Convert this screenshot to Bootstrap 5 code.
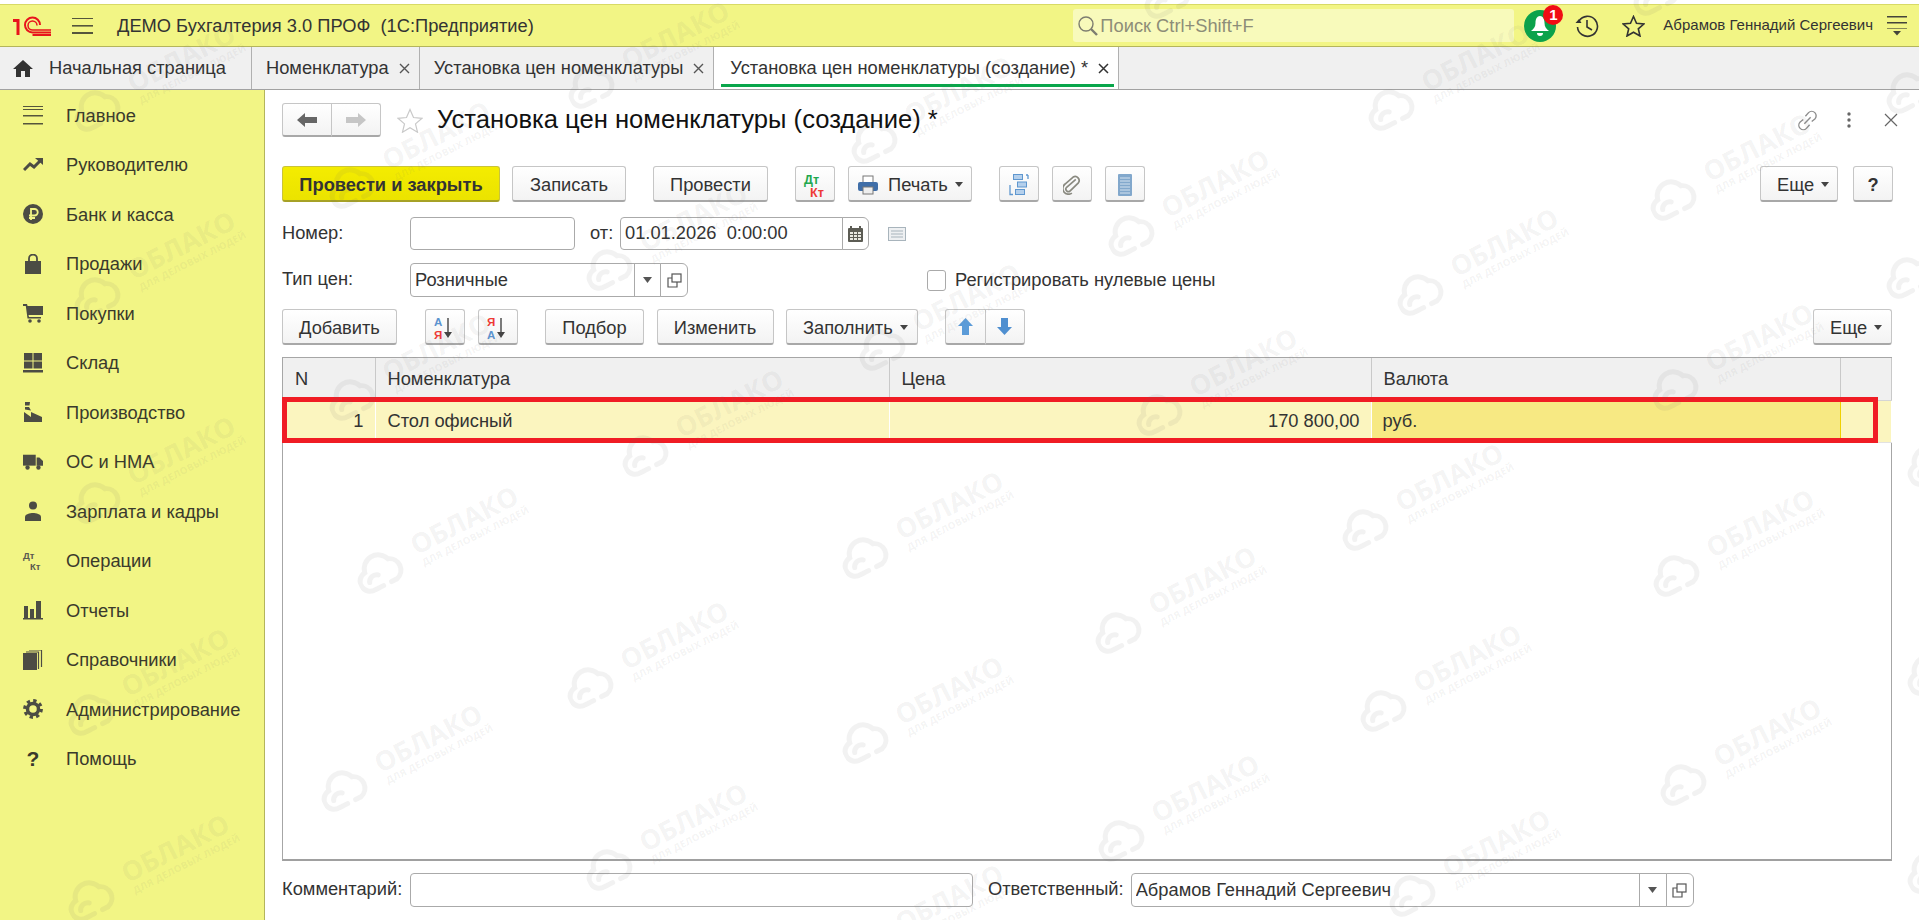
<!DOCTYPE html>
<html lang="ru">
  <head>
    <meta charset="utf-8" />
    <title>Установка цен номенклатуры (создание)</title>
    <link href="https://cdn.jsdelivr.net/npm/bootstrap@5.3.2/dist/css/bootstrap.min.css" rel="stylesheet" />
    <script src="https://cdn.jsdelivr.net/npm/bootstrap@5.3.2/dist/js/bootstrap.bundle.min.js"></script>
    <style>
      body {
        font-family: "Liberation Sans", Arial, sans-serif;
        font-size: 18.3px;
        color: #333;
        background: #fff;
        overflow: hidden;
      }
      .page {
        height: 920px;
        padding-top: 4px;
      }
      .top-bar {
        height: 43px;
        flex: none;
        background: #f2f585;
        border-top: 1px solid #d8da66;
        border-bottom: 1px solid #b4b55c;
        padding: 0 12px 0 13px;
      }
      .burger {
        margin-left: 21px;
        margin-right: 24px;
      }
      .search-box {
        width: 441px;
        height: 33px;
        margin-left: auto;
        padding-left: 5px;
        gap: 2px;
        color: #8d8d78;
        border-radius: 3px;
        background: #f8fabb;
      }
      .bell {
        width: 32px;
        height: 32px;
        margin-left: 10px;
        background: #0ba24b;
      }
      .bell .badge {
        top: -5px;
        right: -7px;
        width: 20px;
        height: 20px;
        padding: 0;
        font-size: 15px;
        line-height: 20px;
        background: #f00d14;
      }
      .top-hist {
        margin-left: 19px;
      }
      .top-star {
        margin-left: 23px;
      }
      .top-user {
        font-size: 15px;
        margin-left: 18px;
        margin-right: 14px;
        white-space: nowrap;
      }
      .tab-bar {
        height: 43px;
        flex: none;
        background: #f0f0f0;
        border-bottom: 1px solid #a2a2a2;
      }
      .tab-item {
        height: 42px;
        padding: 0 9px 0 14px;
        border-right: 1px solid #b0b0b0;
        white-space: nowrap;
      }
      .tab-item svg.cls {
        margin-left: 10px;
      }
      .tab-home {
        width: 252px;
        padding-left: 13px;
      }
      .tab-home svg {
        margin-right: 16px;
      }
      .tab-active {
        background: #fff;
        position: relative;
        padding-left: 16px;
        padding-right: 9px;
      }
      .tab-active::after {
        content: "";
        position: absolute;
        left: 7px;
        right: 4px;
        bottom: 2px;
        height: 3px;
        background: #0aa64b;
      }
      .side-bar {
        width: 265px;
        flex: none;
        padding-top: 0.5px;
        background: #f2f585;
        border-right: 1px solid #b4b55c;
      }
      .side-item {
        height: 49.5px;
        padding-left: 23px;
        color: #3a3a2c;
      }
      .side-item svg,
      .side-item .side-q {
        width: 20px;
        height: 20px;
        margin-right: 23px;
        flex: none;
      }
      .side-q {
        font-size: 21px;
        line-height: 20px;
        text-align: center;
        font-weight: bold;
      }
      .work {
        padding: 13px 27px 0 17px;
        min-width: 0;
      }
      .tb-row {
        height: 36px;
        gap: 27px;
      }
      .tb-row-tools {
        gap: 27.5px;
      }
      .tb-group {
        gap: 12px;
      }
      .tb-group-13 {
        gap: 13px;
      }
      .tb-group-125 {
        gap: 12.5px;
      }
      .tb-group-help {
        gap: 15px;
        margin-right: -1px;
      }
      .btn.cbtn {
        height: 36px;
        padding: 2px 0 0;
        font-size: 18.3px;
        color: #333;
        background: linear-gradient(#fff, #f3f3f3);
        border: 1px solid #c6c6c6;
        border-bottom: 2px solid #a8a8a8;
        border-radius: 3px;
        display: flex;
        align-items: center;
        justify-content: center;
        white-space: nowrap;
      }
      .btn.cbtn-main {
        font-weight: bold;
        background: linear-gradient(#f4ec00, #ebe300);
        border-color: #c9c33a;
        border-bottom-color: #a6a126;
      }
      .btn.cbtn.dropdown-toggle {
        justify-content: flex-start;
        padding-left: 16px;
      }
      .btn.cbtn.dropdown-toggle::after {
        margin-left: 7px;
        color: #444;
        border-top-width: 5px;
        border-left-width: 4px;
        border-right-width: 4px;
      }
      .bw-ico { width: 40px; }
      .bw-close { width: 218px; }
      .bw-write { width: 114px; }
      .bw-post { width: 115px; }
      .btn.cbtn.bw-print { width: 124px; padding-left: 9px; }
      .bw-print svg { margin-right: 10px; }
      .bw-more { width: 78px; }
      .bw-more-end { width: 79px; }
      .bw-add { width: 115px; }
      .bw-pick { width: 99px; }
      .bw-edit { width: 117px; }
      .bw-fill { width: 131.5px; }
      .nav-group {
        width: 99px;
        height: 34px;
      }
      .btn-group .btn.cbtn {
        height: 34px;
        padding-top: 0;
        flex: 1;
      }
      .order-group .btn.cbtn {
        height: 36px;
      }
      .order-group {
        width: 80px;
      }
      .star-ico {
        margin-left: 16px;
        margin-right: 14px;
      }
      .doc-title {
        font-size: 25.6px;
        line-height: 32px;
        margin: 0 0 2px;
        font-weight: normal;
        color: #111;
      }
      .nav-acts {
        gap: 28px;
        margin-right: -6px;
      }
      .nav-close {
        margin-left: 4px;
      }
      .field-row {
        height: 34px;
      }
      .field-row-first {
        height: 33px;
      }
      .lbl {
        width: 128px;
        flex: none;
        padding-bottom: 2px;
      }
      .form-control.cinput {
        height: 34px;
        min-height: 34px;
        padding: 0 4px 1px;
        font-size: 18.3px;
        color: #333;
        border: 1px solid #aaa;
        border-radius: 4px;
        box-shadow: none;
      }
      .field-row-first .form-control.cinput {
        height: 33px;
        min-height: 33px;
      }
      .input-group > .input-group-text.cadd {
        height: 34px;
        padding: 0;
        justify-content: center;
        background: #fff;
        border: 1px solid #aaa;
        font-size: 10px;
      }
      .field-row-first .input-group > .input-group-text.cadd {
        height: 33px;
      }
      .w-num { width: 165px; }
      .w-date { width: 249px; }
      .w-type { width: 278px; }
      .w-cmt { width: 563px; }
      .w-resp { width: 563px; }
      .add-27 { width: 27px; }
      .add-28 { width: 28px; }
      .from-lbl {
        margin-left: 15px;
        width: 30px;
        padding-bottom: 2px;
      }
      .note-ico {
        margin-left: 19px;
      }
      .check-wrap {
        margin-left: 239px;
      }
      .form-check-input.ccheck {
        width: 19px;
        height: 21px;
        margin: 0 9px 0 0;
        border: 1px solid #aaa;
        border-radius: 3px;
      }
      .grid-box {
        height: 504px;
        border: 1px solid #a6a6a6;
        border-bottom: 2px solid #a0a0a0;
      }
      .cgrid {
        table-layout: fixed;
        width: 1608px;
        margin: 0;
        color: #333;
        font-size: 18.3px;
      }
      .cgrid th {
        height: 42px;
        padding: 0 0 0 12px;
        font-weight: normal;
        vertical-align: middle;
        background: #f0f0f0;
        border: 0;
        border-right: 1px solid #c9c9c9;
        border-bottom: 1px solid #d5d5d5;
      }
      .cgrid td {
        height: 42px;
        padding: 0 0 0 12px;
        vertical-align: middle;
        background: #fbf5bf;
        color: #333;
        border: 0;
        border-right: 1px solid #fff;
        border-bottom: 1px solid #e2e2e2;
      }
      .cgrid td.cell-num {
        text-align: right;
        padding-right: 11px;
      }
      .cgrid td.cell-on {
        background: #f7e983;
        border: 1px solid #efd000;
        padding-left: 11px;
      }
      .red-frame {
        position: absolute;
        left: -1px;
        top: 39px;
        width: 1596px;
        height: 46px;
        border: 5px solid #f01c24;
      }
      .dk-ico {
        overflow: visible;
      }
      .wm-layer {
        position: absolute;
        inset: 0;
        overflow: hidden;
        pointer-events: none;
        z-index: 20;
      }
      .wm-mark {
        position: absolute;
        display: flex;
        align-items: center;
        gap: 15px;
        transform: rotate(-27deg);
        transform-origin: 25px 25px;
        color: rgba(110, 110, 110, 0.085);
        font-family: "Open Sans", "Liberation Sans", sans-serif;
        font-weight: 700;
        white-space: nowrap;
      }
      .wm-mark svg {
        flex: none;
      }
      .wm-name {
        font-size: 27px;
        line-height: 28px;
      }
      .wm-sub {
        font-size: 9.6px;
        line-height: 12px;
        letter-spacing: 0.35px;
        padding-left: 2px;
      }
      .mt-tb { margin-top: 29px; }
      .mt-f1 { margin-top: 15px; }
      .mt-f2 { margin-top: 13px; }
      .mt-f3 { margin-top: 12px; }
      .flex-none { flex: none; }
      .gc-n { width: 92px; }
      .gc-name { width: 514px; }
      .gc-price { width: 482px; }
      .gc-cur { width: 469px; }
      .gc-end { width: 51px; }
      .resp-lbl { margin-left: 15px; margin-right: 7px; white-space: nowrap; padding-bottom: 2px; }
    </style>
  </head>
  <body>
    <div class="page d-flex flex-column position-relative">
      <!-- top yellow bar -->
      <div class="top-bar d-flex align-items-center">
        <svg width="38" height="20" viewBox="0 0 38 20" fill="none" stroke="#e8141c" stroke-width="3">
          <path d="M0 4.500h5V19" />
          <path d="M27 9a7.500 7.500 0 1 0-7.500 7.500H38" stroke-width="2" />
          <path d="M24 9.500a4.500 4.500 0 1 0-4.500 4.500H38" stroke-width="1.500" />
          <path d="M19.500 19H38" stroke-width="2" />
        </svg>
        <svg class="burger" width="21" height="16" viewBox="0 0 21 16" fill="#55553c">
          <rect y="0" width="21" height="1" /><rect y="7" width="21" height="1.6" /><rect y="14" width="21" height="2" />
        </svg>
        <span>ДЕМО Бухгалтерия 3.0 ПРОФ&nbsp;&nbsp;(1С:Предприятие)</span>
        <div class="search-box d-flex align-items-center">
          <svg width="20" height="20" viewBox="0 0 20 20" fill="none" stroke="#7d7d70">
            <circle cx="8" cy="8" r="7" stroke-width="1.4" /><path d="M13 13l6 6" stroke-width="2.4" />
          </svg>
          <span>Поиск Ctrl+Shift+F</span>
        </div>
        <div class="bell rounded-circle position-relative d-flex align-items-center justify-content-center flex-none">
          <svg width="20" height="22" viewBox="0 0 20 22" fill="#fff">
            <path d="M10 1c3 0 4.500 3 4.500 7 0 4 2 6 4.500 8H1c2.500-2 4.500-4 4.500-8 0-4 1.500-7 4.500-7z" /><path d="M7 18h6a3 3 0 0 1-6 0z" />
          </svg>
          <span class="badge rounded-circle position-absolute">1</span>
        </div>
        <svg class="top-hist flex-none" width="24" height="24" viewBox="0 0 24 24" fill="none" stroke="#333" stroke-width="1.6">
          <path d="M4 7a10 10 0 1 1-1.500 6" /><path d="M12 6v7l5 3" /><path d="M0.500 9h6L4 5z" fill="#333" stroke="none" />
        </svg>
        <svg class="top-star flex-none" width="23" height="22" viewBox="0 0 23 22" fill="none" stroke="#333" stroke-width="1.6">
          <path d="M11.500 1.500l3 6.800 7.300.7-5.500 4.800 1.700 7.200-6.500-3.800-6.500 3.800 1.700-7.200-5.500-4.800 7.300-.7z" />
        </svg>
        <span class="top-user">Абрамов Геннадий Сергеевич</span>
        <svg class="flex-none" width="20" height="20" viewBox="0 0 20 20" fill="#44443a">
          <rect y="0" width="20" height="1.500" /><rect y="6" width="20" height="1.500" /><rect y="12" width="20" height="1" opacity=".6" /><path d="M6 15h8l-4 4.500z" />
        </svg>
      </div>

      <!-- open windows -->
      <div class="tab-bar d-flex">
        <div class="tab-item tab-home d-flex align-items-center">
          <svg width="20" height="18" viewBox="0 0 20 18" fill="#333"><path d="M10 1L0 10h3v8h5v-6h4v6h5v-8h3z" /></svg>
          <span>Начальная страница</span>
        </div>
        <div class="tab-item d-flex align-items-center">
          <span>Номенклатура</span>
          <svg class="cls" width="11" height="11" viewBox="0 0 11 11" stroke="#555" stroke-width="1.400"><path d="M1 1l9 9M10 1l-9 9" /></svg>
        </div>
        <div class="tab-item d-flex align-items-center">
          <span>Установка цен номенклатуры</span>
          <svg class="cls" width="11" height="11" viewBox="0 0 11 11" stroke="#555" stroke-width="1.400"><path d="M1 1l9 9M10 1l-9 9" /></svg>
        </div>
        <div class="tab-item tab-active d-flex align-items-center">
          <span>Установка цен номенклатуры (создание) *</span>
          <svg class="cls" width="11" height="11" viewBox="0 0 11 11" stroke="#333" stroke-width="1.500"><path d="M1 1l9 9M10 1l-9 9" /></svg>
        </div>
      </div>

      <div class="d-flex flex-grow-1">
        <!-- sections -->
        <div class="side-bar">
          <div class="side-item d-flex align-items-center">
            <svg viewBox="0 0 20 20" fill="#55553c"><rect y="1" width="20" height="1" /><rect y="4" width="20" height="1" /><rect y="10" width="20" height="1.500" /><rect y="18" width="20" height="1.500" /></svg>
            <span>Главное</span>
          </div>
          <div class="side-item d-flex align-items-center">
            <svg viewBox="0 0 20 20" fill="none" stroke="#4c4c44" stroke-width="3"><path d="M1 15l6-6 4 3 6-6" /><path d="M12 3h8v7z" fill="#4c4c44" stroke="none" /></svg>
            <span>Руководителю</span>
          </div>
          <div class="side-item d-flex align-items-center">
            <svg viewBox="0 0 20 20"><circle cx="10" cy="10" r="10" fill="#4c4c44" /><path d="M8 16V5h3.500a3 3 0 0 1 0 6.500H6M6 14h6" fill="none" stroke="#f2f585" stroke-width="1.800" /></svg>
            <span>Банк и касса</span>
          </div>
          <div class="side-item d-flex align-items-center">
            <svg viewBox="0 0 20 20" fill="#4c4c44"><path d="M2 7h16v13H2z" /><path d="M6 9V4.500a4 4 0 0 1 8 0V9" fill="none" stroke="#4c4c44" stroke-width="1.800" /></svg>
            <span>Продажи</span>
          </div>
          <div class="side-item d-flex align-items-center">
            <svg viewBox="0 0 20 20" fill="#4c4c44"><path d="M0 1h4l.6 2H20v9H5.500l.5 2h12v1.500H4.500L2.800 3H0z" /><circle cx="7" cy="18" r="1.800" /><circle cx="16" cy="18" r="1.800" /></svg>
            <span>Покупки</span>
          </div>
          <div class="side-item d-flex align-items-center">
            <svg viewBox="0 0 20 20" fill="#4c4c44"><rect x="1" y="0" width="8.500" height="7.500" /><rect x="10.500" y="0" width="8.500" height="7.500" /><rect x="1" y="8.500" width="8.500" height="7" /><rect x="10.500" y="8.500" width="8.500" height="7" /><rect x="0" y="17" width="20" height="2.500" /></svg>
            <span>Склад</span>
          </div>
          <div class="side-item d-flex align-items-center">
            <svg viewBox="0 0 20 20" fill="#4c4c44"><path d="M1 20V10l7 5v-5l11 5v5z" /><path d="M2 0h5l-.5 3.500H2zM2 5h4l2 3.500-6-1z" /></svg>
            <span>Производство</span>
          </div>
          <div class="side-item d-flex align-items-center">
            <svg viewBox="0 0 22 20" fill="#4c4c44"><rect x="0" y="2" width="14" height="12" /><path d="M15 5h3l4 4v5h-7z" /><circle cx="5" cy="16" r="2.400" /><circle cx="17" cy="16" r="2.400" /></svg>
            <span>ОС и НМА</span>
          </div>
          <div class="side-item d-flex align-items-center">
            <svg viewBox="0 0 20 20" fill="#4c4c44"><circle cx="10" cy="4.500" r="4" /><path d="M2 20v-4c0-3 5-4 8-4s8 1 8 4v4z" /></svg>
            <span>Зарплата и кадры</span>
          </div>
          <div class="side-item d-flex align-items-center">
            <svg class="dk-ico" viewBox="0 0 20 20" fill="#5a5a50" font-family="Liberation Sans, sans-serif" font-weight="700" font-size="9.500"><text x="0" y="8">Дт</text><text x="7" y="19">Кт</text></svg>
            <span>Операции</span>
          </div>
          <div class="side-item d-flex align-items-center">
            <svg viewBox="0 0 20 20" fill="#4c4c44"><rect x="1" y="6" width="4" height="12" /><rect x="7" y="9" width="4" height="9" /><rect x="13" y="1" width="5" height="17" /><rect x="0" y="18" width="20" height="1.500" /></svg>
            <span>Отчеты</span>
          </div>
          <div class="side-item d-flex align-items-center">
            <svg viewBox="0 0 20 20" fill="#4c4c44"><rect x="0" y="3" width="14" height="17" /><path d="M15.500 19V2H3M18.500 17V0H6" fill="none" stroke="#4c4c44" stroke-width="1.200" /></svg>
            <span>Справочники</span>
          </div>
          <div class="side-item d-flex align-items-center">
            <svg viewBox="0 0 20 20" fill="none" stroke="#4c4c44"><circle cx="10" cy="10" r="5.500" stroke-width="3.500" /><circle cx="10" cy="10" r="8.300" stroke-width="3.200" stroke-dasharray="3.300 3.210" /></svg>
            <span>Администрирование</span>
          </div>
          <div class="side-item d-flex align-items-center">
            <div class="side-q">?</div>
            <span>Помощь</span>
          </div>
        </div>

        <!-- document form -->
        <div class="work flex-grow-1">
          <div class="d-flex align-items-center">
            <div class="btn-group nav-group">
              <button type="button" class="btn cbtn">
                <svg width="20" height="14" viewBox="0 0 20 14" fill="#666"><path d="M0 7l8-7v4h12v6H8v4z" /></svg>
              </button>
              <button type="button" class="btn cbtn">
                <svg width="20" height="14" viewBox="0 0 20 14" fill="#c6c6c6"><path d="M20 7l-8-7v4H0v6h12v4z" /></svg>
              </button>
            </div>
            <svg class="star-ico" width="26" height="25" viewBox="0 0 26 25" fill="none" stroke="#c9c9c9" stroke-width="1.200"><path d="M13 1.500l3.500 8 8.500.8-6.500 5.600 2 8.300-7.500-4.400-7.500 4.400 2-8.300L1 10.300l8.500-.8z" /></svg>
            <h1 class="doc-title">Установка цен номенклатуры (создание) *</h1>
            <div class="nav-acts d-flex align-items-center ms-auto">
              <svg width="21" height="21" viewBox="0 0 20 20" fill="none" stroke="#8c8c8c" stroke-width="1.300"><path d="M8 6l3-3.500a4 4 0 0 1 6 6L14 11" /><path d="M12 14l-3 3.500a4 4 0 0 1-6-6L6 9" /><path d="M7 13l6-6" /></svg>
              <svg width="6" height="18" viewBox="0 0 6 18" fill="#666"><circle cx="3" cy="3" r="1.700" /><circle cx="3" cy="9" r="1.700" /><circle cx="3" cy="15" r="1.700" /></svg>
              <svg class="nav-close" width="14" height="14" viewBox="0 0 14 14" stroke="#666" stroke-width="1.200"><path d="M1 1l12 12M13 1L1 13" /></svg>
            </div>
          </div>

          <div class="tb-row d-flex mt-tb">
            <div class="tb-group d-flex">
              <button type="button" class="btn cbtn cbtn-main bw-close">Провести и закрыть</button>
              <button type="button" class="btn cbtn bw-write">Записать</button>
            </div>
            <button type="button" class="btn cbtn bw-post">Провести</button>
            <div class="tb-group-13 d-flex">
              <button type="button" class="btn cbtn bw-ico">
                <svg width="26" height="26" viewBox="0 0 26 26" font-family="Liberation Sans, sans-serif" font-weight="700" font-size="12.500"><text x="2" y="11.500" fill="#22a84f">Дт</text><text x="8" y="24.500" fill="#ee3a36">Кт</text></svg>
              </button>
              <button type="button" class="btn cbtn bw-print dropdown-toggle">
                <svg width="20" height="20" viewBox="0 0 20 20"><rect x="5" y="1" width="10" height="7" fill="#fff" stroke="#777" /><rect x="0" y="7" width="20" height="9" rx="2" fill="#3f6ea8" /><rect x="5" y="12" width="10" height="7" fill="#eee" stroke="#777" /></svg>
                <span>Печать</span>
              </button>
            </div>
            <div class="tb-group-13 d-flex">
              <button type="button" class="btn cbtn bw-ico">
                <svg width="20" height="23" viewBox="0 0 20 23" fill="#b5d0ec" stroke="#5f97cf"><rect x="4.500" y="1.500" width="9" height="5" /><rect x="8.500" y="9" width="9" height="5" /><rect x="6.500" y="16.500" width="9" height="5" /><path d="M1 12v9.500h3M19 2h-2M19 2v4" fill="none" stroke-width="1.300" /></svg>
              </button>
              <button type="button" class="btn cbtn bw-ico">
                <svg width="18" height="20" viewBox="0 0 18 20" fill="none" stroke="#8a8a80" stroke-width="1.700"><path d="M12 4L4 13a2.500 2.500 0 0 0 4 3l7-9a4 4 0 0 0-6-5L2 10a5.500 5.500 0 0 0 8 8" transform="rotate(8 9 10)" /></svg>
              </button>
              <button type="button" class="btn cbtn bw-ico">
                <svg width="14" height="22" viewBox="0 0 14 22"><rect x="0" y="0" width="14" height="22" rx="1" fill="#82a8cc" /><path d="M2 4h10M2 7h10M2 10h10M2 13h10M2 16h10M2 19h10" stroke="#d5e3f0" /></svg>
              </button>
            </div>
            <div class="tb-group-help d-flex ms-auto">
              <button type="button" class="btn cbtn bw-more dropdown-toggle">Еще</button>
              <button type="button" class="btn cbtn bw-ico fw-bold">?</button>
            </div>
          </div>

          <div class="field-row field-row-first d-flex align-items-center mt-f1">
            <span class="lbl">Номер:</span>
            <input type="text" class="form-control cinput w-num" />
            <span class="from-lbl">от:</span>
            <div class="input-group flex-nowrap w-date">
              <input type="text" class="form-control cinput" value="01.01.2026&nbsp;&nbsp;0:00:00" />
              <span class="input-group-text cadd add-27">
                <svg width="15" height="16" viewBox="0 0 15 16"><rect x="0" y="2" width="15" height="14" rx="1" fill="#5c5c54" /><rect x="2" y="6" width="11" height="8" fill="#e8e8e0" /><path d="M3 0v3M12 0v3" stroke="#5c5c54" stroke-width="2" /><path d="M2 8.500h11M2 11.500h11M5.500 6v8M9.500 6v8" stroke="#5c5c54" /></svg>
              </span>
            </div>
            <svg class="note-ico" width="18" height="14" viewBox="0 0 18 14" fill="#eef0f2" stroke="#a8b4bc"><rect x=".5" y=".5" width="17" height="13" /><path d="M3 4h12M3 7h12M3 10h12" /></svg>
          </div>

          <div class="field-row d-flex align-items-center mt-f2">
            <span class="lbl">Тип цен:</span>
            <div class="input-group flex-nowrap w-type">
              <input type="text" class="form-control cinput" value="Розничные" />
              <span class="input-group-text cadd add-27">
                <svg width="9" height="6" viewBox="0 0 9 6" fill="#555"><path d="M0 0h9L4.500 6z" /></svg>
              </span>
              <span class="input-group-text cadd add-28">
                <svg width="15" height="15" viewBox="0 0 15 15" fill="none" stroke="#555" stroke-width="1.200"><rect x="5" y="1" width="9" height="8" /><path d="M5 5H1v9h9v-5" /></svg>
              </span>
            </div>
            <div class="check-wrap d-flex align-items-center">
              <input class="form-check-input ccheck" type="checkbox" id="zeroPrices" />
              <label for="zeroPrices">Регистрировать нулевые цены</label>
            </div>
          </div>

          <div class="tb-row tb-row-tools d-flex mt-f3">
            <button type="button" class="btn cbtn bw-add">Добавить</button>
            <div class="tb-group-13 d-flex">
              <button type="button" class="btn cbtn bw-ico">
                <svg width="24" height="26" viewBox="0 0 24 26" font-family="Liberation Sans, sans-serif" font-weight="700" font-size="11.500"><text x="1" y="11" fill="#5b93cf">А</text><text x="1" y="24" fill="#ee3a36">Я</text><path d="M15 3v17" stroke="#444" stroke-width="1.400" /><path d="M11 17h8l-4 6z" fill="#444" /></svg>
              </button>
              <button type="button" class="btn cbtn bw-ico">
                <svg width="24" height="26" viewBox="0 0 24 26" font-family="Liberation Sans, sans-serif" font-weight="700" font-size="11.500"><text x="1" y="11" fill="#ee3a36">Я</text><text x="1" y="24" fill="#5b93cf">А</text><path d="M15 3v17" stroke="#444" stroke-width="1.400" /><path d="M11 17h8l-4 6z" fill="#444" /></svg>
              </button>
            </div>
            <div class="tb-group-125 d-flex">
              <button type="button" class="btn cbtn bw-pick">Подбор</button>
              <button type="button" class="btn cbtn bw-edit">Изменить</button>
              <button type="button" class="btn cbtn bw-fill dropdown-toggle">Заполнить</button>
            </div>
            <div class="btn-group order-group">
              <button type="button" class="btn cbtn">
                <svg width="15" height="17" viewBox="0 0 15 17" fill="#5b9bd8"><path d="M7.500 0L15 8h-4v9H4V8H0z" /></svg>
              </button>
              <button type="button" class="btn cbtn">
                <svg width="15" height="17" viewBox="0 0 15 17" fill="#4f8fd0"><path d="M7.500 17L15 9h-4V0H4v9H0z" /></svg>
              </button>
            </div>
            <button type="button" class="btn cbtn bw-more-end dropdown-toggle ms-auto">Еще</button>
          </div>

          <div class="grid-box position-relative mt-f3">
            <table class="table cgrid">
              <colgroup>
                <col class="gc-n" /><col class="gc-name" /><col class="gc-price" /><col class="gc-cur" /><col class="gc-end" />
              </colgroup>
              <thead>
                <tr><th>N</th><th>Номенклатура</th><th>Цена</th><th>Валюта</th><th></th></tr>
              </thead>
              <tbody>
                <tr>
                  <td class="cell-num">1</td>
                  <td>Стол офисный</td>
                  <td class="cell-num">170 800,00</td>
                  <td class="cell-on">руб.</td>
                  <td></td>
                </tr>
              </tbody>
            </table>
            <div class="red-frame"></div>
          </div>

          <div class="field-row d-flex align-items-center mt-f3">
            <span class="lbl">Комментарий:</span>
            <input type="text" class="form-control cinput w-cmt" />
            <span class="resp-lbl">Ответственный:</span>
            <div class="input-group flex-nowrap w-resp">
              <input type="text" class="form-control cinput" value="Абрамов Геннадий Сергеевич" />
              <span class="input-group-text cadd add-28">
                <svg width="9" height="6" viewBox="0 0 9 6" fill="#555"><path d="M0 0h9L4.500 6z" /></svg>
              </span>
              <span class="input-group-text cadd add-28">
                <svg width="15" height="15" viewBox="0 0 15 15" fill="none" stroke="#555" stroke-width="1.200"><rect x="5" y="1" width="9" height="8" /><path d="M5 5H1v9h9v-5" /></svg>
              </span>
            </div>
          </div>
        </div>
      </div>

      <div class="wm-layer" id="marks"></div>
    </div>

    <script>
      // watermark clouds, centre of each cloud in page pixels
      const clouds = [
        [96, 108], [96, 295], [96, 500], [90, 712], [90, 898],
        [351, 185], [351, 397], [379, 570], [343, 788],
        [590, 85], [608, 267], [644, 453], [589, 685], [608, 867],
        [873, 140], [881, 347], [864, 555], [864, 740], [864, 948],
        [1166, -5], [1130, 233], [1158, 412], [1117, 630], [1120, 838],
        [1390, 107], [1419, 292], [1364, 527], [1382, 708], [1411, 893],
        [1655, -8], [1672, 197], [1674, 387], [1675, 573], [1682, 782],
        [1908, 90], [1908, 275], [1929, 463], [1929, 672], [1929, 870],
      ];
      const layer = document.getElementById("marks");
      let html = "";
      for (let i = 0; i < clouds.length; i++) {
        const left = clouds[i][0] - 25;
        const top = clouds[i][1] - 25;
        html +=
          "<div class='wm-mark' style='left:" + left + "px;top:" + top + "px'>" +
          "<svg width='50' height='50' viewBox='0 0 50 50' fill='none' stroke='currentColor' stroke-width='5' stroke-linecap='round'>" +
          "<path d='M22 41H13A10 10 0 0 1 11 21 A14 14 0 0 1 38 19 A11.500 11.500 0 0 1 37 41 H31'/>" +
          "<path d='M11 32a7 7 0 0 1 11-3'/></svg>" +
          "<div><div class='wm-name'>ОБЛАКО</div><div class='wm-sub'>ДЛЯ ДЕЛОВЫХ ЛЮДЕЙ</div></div></div>";
      }
      layer.innerHTML = html;
    </script>
  </body>
</html>
